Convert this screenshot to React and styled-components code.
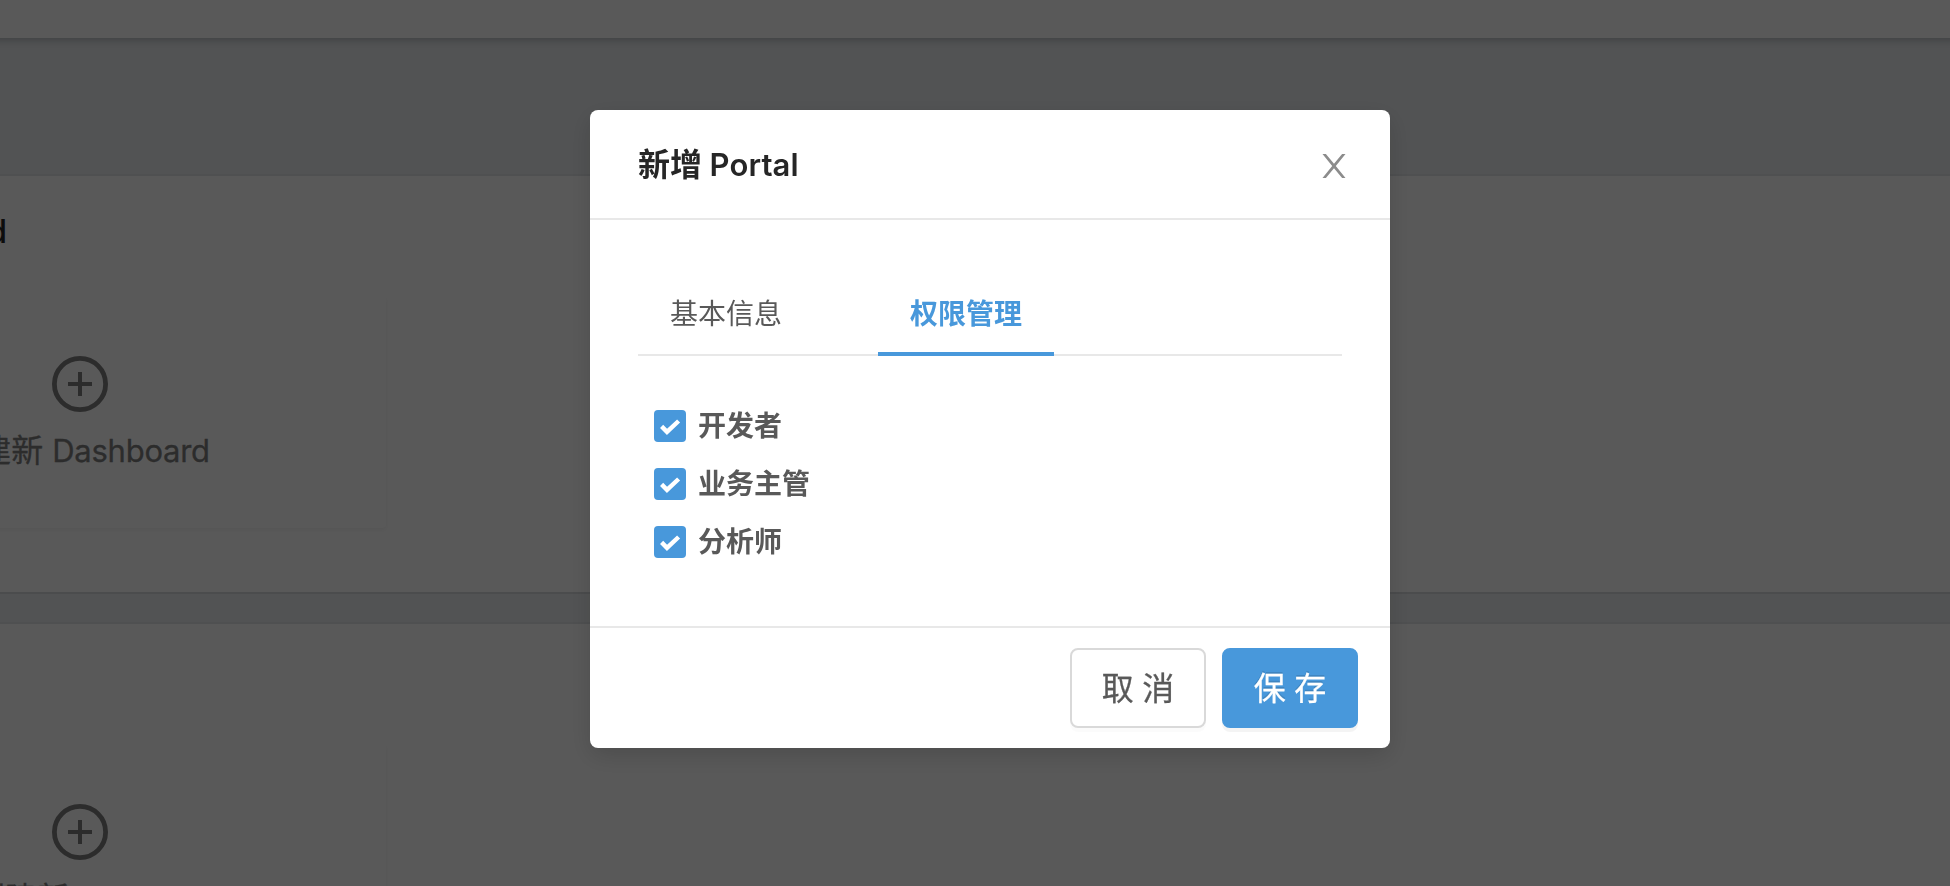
import React from 'react';
import styled, { createGlobalStyle, css } from 'styled-components';

const Global = createGlobalStyle`
  * { box-sizing: border-box; }
  html, body { margin: 0; height: 100%; overflow: hidden; }
  body {
    font-family: Inter, "Noto Sans CJK SC", sans-serif;
    font-size: 28px;
    color: #595959;
    background: #ebeef0;
  }
`;

const Page = styled.div`
  height: 886px;
  overflow: hidden;
  background: #ebeef0;
`;

const TopBar = styled.header`
  height: 38px;
  margin: 0 -20px;
  background: #fff;
  box-shadow: 0 2px 8px rgba(0, 21, 41, 0.25);
`;

const Sections = styled.main`
  padding-top: 136px;
  display: flex;
  flex-direction: column;
  gap: 28px;
`;

const Section = styled.section`
  flex: none;
  height: 420px;
  background: #fff;
  border-top: 2px solid #e1e4e7;
  border-bottom: 2px solid #d6d9dc;
`;

const SectionTitle = styled.h2`
  margin: 0;
  padding-top: 32px;
  height: 120px;
  width: 7px;
  display: flex;
  justify-content: flex-end;
  white-space: nowrap;
  font-size: 32px;
  line-height: 48px;
  font-weight: 500;
  color: #262626;
`;

const AddCard = styled.div`
  width: 612px;
  height: 232px;
  margin-left: -226px;
  padding-top: 60px;
  border-radius: 4px;
  display: flex;
  flex-direction: column;
  align-items: center;
  color: #7f7f7f;
  box-shadow: 0 2px 4px rgba(0, 0, 0, 0.05);
`;

const AddLabel = styled.div`
  margin-top: 15px;
  padding-right: 3px;
  font-size: 32px;
  line-height: 48px;
  white-space: nowrap;
  -webkit-text-stroke: 0.3px currentColor;
`;

const Latin = styled.span`
  font-size: 31px;
  letter-spacing: -0.25px;
`;

const Mask = styled.div`
  position: fixed;
  inset: 0;
  display: flex;
  justify-content: center;
  align-items: flex-start;
  padding: 110px 0 0 30px;
  background: rgba(0, 0, 0, 0.65);
`;

const Modal = styled.div`
  width: 800px;
  height: 638px;
  display: flex;
  flex-direction: column;
  background: #fff;
  border-radius: 8px;
  box-shadow: 0 8px 24px rgba(0, 0, 0, 0.15);
`;

const ModalHeader = styled.div`
  height: 110px;
  padding: 3px 44px 0 48px;
  display: flex;
  align-items: center;
  justify-content: space-between;
  border-bottom: 2px solid #e8e8e8;
`;

const Title = styled.div`
  padding-bottom: 2px;
  font-size: 32px;
  line-height: 44px;
  font-weight: 700;
  color: #262626;

  ${Latin} {
    font-weight: 600;
    letter-spacing: 0.1px;
  }
`;

const ModalBody = styled.div`
  flex: 1;
  padding: 48px 48px 0;
`;

const Tabs = styled.div`
  height: 88px;
  display: flex;
  gap: 64px;
  box-shadow: inset 0 -2px #e8e8e8;
`;

const Tab = styled.div`
  padding: 22px 32px 0;
  line-height: 48px;
  border-bottom: 4px solid transparent;
  ${(p) => p.$active && css`
    color: #4898db;
    font-weight: 700;
    border-bottom-color: #4898db;
  `}
`;

const Options = styled.div`
  padding: 54px 16px 0;
  display: flex;
  flex-direction: column;
  gap: 26px;
`;

const Option = styled.label`
  height: 32px;
  display: flex;
  align-items: center;
  gap: 12px;
  font-weight: 700;
`;

const OptionText = styled.span`
  line-height: 30px;
  padding-bottom: 1px;
`;

const Box = styled.span`
  width: 32px;
  height: 32px;
  border-radius: 4px;
  background: #4898db;
  display: flex;
`;

const Footer = styled.div`
  height: 122px;
  padding: 20px 32px;
  display: flex;
  justify-content: flex-end;
  gap: 16px;
  border-top: 2px solid #e8e8e8;
`;

const Button = styled.button`
  width: 136px;
  height: 80px;
  padding: 0 0 5px;
  font: inherit;
  font-size: 32px;
  word-spacing: -0.5px;
  color: #595959;
  -webkit-text-stroke: 0.3px currentColor;
  background: #fff;
  border: 2px solid #d9d9d9;
  border-radius: 8px;
  box-shadow: 0 4px 0 rgba(0, 0, 0, 0.015);
  ${(p) => p.$primary && css`
    color: #fff;
    background: #4898db;
    border-color: #4898db;
    text-shadow: 0 -2px 0 rgba(0, 0, 0, 0.12);
    box-shadow: 0 4px 0 rgba(0, 0, 0, 0.045);
  `}
`;

const PlusCircle = () => (
  <svg width="56" height="56" viewBox="0 0 56 56" fill="none" stroke="currentColor">
    <circle cx="28" cy="28" r="25.6" strokeWidth="4.8" />
    <path d="M16 28H40M28 16V40" strokeWidth="4" />
  </svg>
);

const Close = () => (
  <svg width="24" height="26" viewBox="0 0 24 26" fill="#8c8c8c">
    <path d="M0.5 1H3.9L12 10.7 20.1 1H23.5L13.8 13 23.5 25H20.1L12 15.3 3.9 25H0.5L10.2 13Z" />
  </svg>
);

const Check = () => (
  <svg width="32" height="32" viewBox="0 0 32 32" fill="none" stroke="#fff" strokeWidth="4.4">
    <path d="M7.6 16.4L13 21.9 24.6 11" />
  </svg>
);

const AddItem = ({ name }) => (
  <AddCard>
    <PlusCircle />
    <AddLabel>创建新 <Latin>{name}</Latin></AddLabel>
  </AddCard>
);

export default function App() {
  return (
    <>
      <Global />
      <Page>
        <TopBar />
        <Sections>
          <Section>
            <SectionTitle>Dashboard</SectionTitle>
            <AddItem name="Dashboard" />
          </Section>
          <Section>
            <SectionTitle />
            <AddItem name="Display" />
          </Section>
        </Sections>
      </Page>
      <Mask>
        <Modal>
          <ModalHeader>
            <Title>新增 <Latin>Portal</Latin></Title>
            <Close />
          </ModalHeader>
          <ModalBody>
            <Tabs>
              <Tab>基本信息</Tab>
              <Tab $active>权限管理</Tab>
            </Tabs>
            <Options>
              {['开发者', '业务主管', '分析师'].map((role) => (
                <Option key={role}>
                  <Box><Check /></Box>
                  <OptionText>{role}</OptionText>
                </Option>
              ))}
            </Options>
          </ModalBody>
          <Footer>
            <Button>取 消</Button>
            <Button $primary>保 存</Button>
          </Footer>
        </Modal>
      </Mask>
    </>
  );
}
